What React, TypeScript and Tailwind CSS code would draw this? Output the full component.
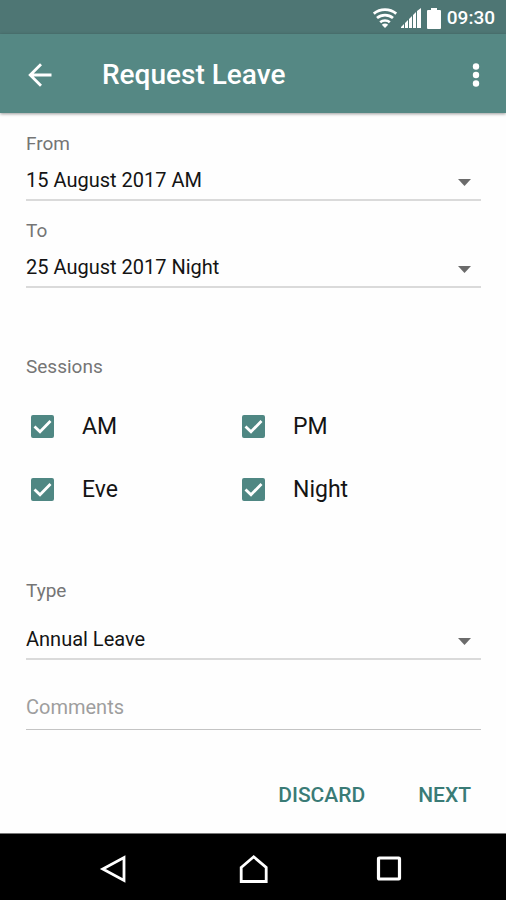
import { useId, type ReactNode } from "react";

function StatusBar() {
  return (
    <div className="flex h-[34px] items-center justify-end bg-[#4e7674] pt-[2px] pr-[11px] text-white">
      <svg className="h-5 w-6" viewBox="0 0 24 20" fill="none" stroke="currentColor" strokeWidth="2.7" aria-hidden="true">
        <path d="M0.8 5.700C7 .3 17 .3 23.2 5.700" />
        <path d="M4 10c4.500-3.900 11.500-3.900 16 0" />
        <path d="M7.200 14.200c2.700-2.300 6.900-2.300 9.600 0" />
        <path d="M8.800 16.700c1.900-1.500 4.500-1.500 6.400 0L12 20z" fill="currentColor" stroke="none" />
      </svg>
      <svg className="ml-1 h-5 w-5" viewBox="0 0 20 20" fill="currentColor" aria-hidden="true">
        <path d="M0 20v-1l3-3v4zM4 20v-5l3-3v8zM8 20v-9l3-3v12zM12 20V7l3-3v16zM16 20V3l4-3v20z" />
      </svg>
      <svg className="ml-[6px] h-[21px] w-[14px]" viewBox="0 0 14 21" fill="currentColor" aria-hidden="true">
        <path d="M4 0h6v2h3a1 1 0 0 1 1 1v17a1 1 0 0 1-1 1H1a1 1 0 0 1-1-1V3a1 1 0 0 1 1-1h3z" />
      </svg>
      <span className="ml-[6px] text-[19px] leading-6 font-medium">09:30</span>
    </div>
  );
}

function AppBar() {
  return (
    <header className="relative flex h-[79px] items-center bg-[#558884] pt-[2px] pr-4 pl-5 text-white shadow-[0_1px_3px_rgba(0,0,0,0.4)]">
      <button type="button" aria-label="Back" className="flex size-10 items-center justify-center">
        <svg className="size-6" viewBox="0 0 24 24" fill="none" stroke="currentColor" strokeWidth="2.800" aria-hidden="true">
          <path d="M23.500 12H2.500M13 1.200 2.200 12 13 22.800" />
        </svg>
      </button>
      <h1 className="ml-[42px] flex-1 text-[28px] leading-9 font-medium">Request Leave</h1>
      <button type="button" aria-label="More options" className="flex h-10 w-7 items-center justify-center">
        <svg className="h-6 w-2" viewBox="0 0 8 24" fill="currentColor" aria-hidden="true">
          <circle cx="4" cy="3.500" r="3.200" />
          <circle cx="4" cy="12" r="3.200" />
          <circle cx="4" cy="20.500" r="3.200" />
        </svg>
      </button>
    </header>
  );
}

function SelectField({ label, options, roomy = false }: { label: string; options: string[]; roomy?: boolean }) {
  const id = useId();
  return (
    <div className="flex flex-col">
      <label htmlFor={id} className="h-6 text-[19px] leading-6 text-[#757575]">
        {label}
      </label>
      <div className={roomy ? "relative mt-3" : "relative"}>
        <select
          id={id}
          className="block h-[45px] w-full appearance-none rounded-none border-b-2 border-[#dadada] bg-transparent pt-1 pr-10 text-[20px] text-[#141414] outline-none"
        >
          {options.map((option) => (
            <option key={option}>{option}</option>
          ))}
        </select>
        <svg
          className="pointer-events-none absolute top-[23px] right-[10px] h-[7px] w-[13px] text-[#6b6b6b]"
          viewBox="0 0 13 7"
          fill="currentColor"
          aria-hidden="true"
        >
          <path d="M0 0h13L6.500 7z" />
        </svg>
      </div>
    </div>
  );
}

function Session({ label }: { label: string }) {
  return (
    <label className="flex h-[63px] items-center gap-7 text-[23px] leading-7 text-[#141414]">
      <span className="grid size-[23px] place-items-center">
        <input
          type="checkbox"
          defaultChecked
          className="peer col-start-1 row-start-1 size-[23px] appearance-none rounded-[2px] border-2 border-[#4f8783] checked:bg-[#4f8783]"
        />
        <svg
          className="pointer-events-none invisible col-start-1 row-start-1 size-[23px] text-white peer-checked:visible"
          viewBox="0 0 23 23"
          fill="none"
          stroke="currentColor"
          strokeWidth="2.800"
          aria-hidden="true"
        >
          <path d="M3.500 11.500 9 16.700 19.500 6" />
        </svg>
      </span>
      {label}
    </label>
  );
}

function TextButton({ children, submit = false }: { children: ReactNode; submit?: boolean }) {
  return (
    <button type={submit ? "submit" : "button"} className="h-12 px-[10px] text-[21px] leading-6 font-medium text-[#3a7b76]">
      {children}
    </button>
  );
}

function NavBar() {
  return (
    <nav className="flex h-[67px] items-center justify-center gap-[97px] border-t border-[#777777] bg-black pt-[3px] text-white">
      <button type="button" aria-label="Back" className="flex size-10 items-center justify-center">
        <svg className="size-7 overflow-visible" viewBox="0 0 28 28" fill="none" stroke="currentColor" strokeWidth="2.800" aria-hidden="true">
          <path d="M22 2.500v23L.8 14z" />
        </svg>
      </button>
      <button type="button" aria-label="Home" className="flex size-10 items-center justify-center">
        <svg className="size-7 overflow-visible" viewBox="0 0 28 28" fill="none" stroke="currentColor" strokeWidth="2.800" aria-hidden="true">
          <path d="M2.200 12.500 14.700 1.800l12.500 10.700V26.500h-25z" />
        </svg>
      </button>
      <button type="button" aria-label="Recent apps" className="flex size-10 items-center justify-center">
        <svg className="size-7" viewBox="0 0 28 28" fill="none" stroke="currentColor" strokeWidth="3.200" aria-hidden="true">
          <rect x="2.500" y="3" width="21" height="21" rx="0.800" />
        </svg>
      </button>
    </nav>
  );
}

export default function App() {
  return (
    <div className="flex min-h-screen flex-col bg-[#fefefe] font-['Roboto',sans-serif]">
      <StatusBar />
      <AppBar />
      <main className="flex flex-1 flex-col">
        <form className="flex flex-col pt-[19px] pr-[25px] pl-[26px]" onSubmit={(event) => event.preventDefault()}>
          <div className="flex flex-col gap-[18px]">
            <SelectField label="From" options={["15 August 2017 AM"]} />
            <SelectField label="To" options={["25 August 2017 Night"]} />
          </div>
          <fieldset className="mt-[67px]">
            <legend className="h-6 text-[19px] leading-6 text-[#757575]">Sessions</legend>
            <div className="mt-4 grid grid-cols-2 pr-7 pl-[5px]">
              <Session label="AM" />
              <Session label="PM" />
              <Session label="Eve" />
              <Session label="Night" />
            </div>
          </fieldset>
          <div className="mt-[58px]">
            <SelectField label="Type" options={["Annual Leave"]} roomy />
          </div>
          <input
            type="text"
            aria-label="Comments"
            placeholder="Comments"
            className="mt-[25px] h-[45px] w-full rounded-none border-b border-[#c4c4c4] bg-transparent text-[20px] text-[#141414] outline-none placeholder:text-[#9e9e9e]"
          />
          <div className="mt-[41px] mb-3 flex justify-end gap-[33px]">
            <TextButton>DISCARD</TextButton>
            <TextButton submit>NEXT</TextButton>
          </div>
        </form>
      </main>
      <NavBar />
    </div>
  );
}
